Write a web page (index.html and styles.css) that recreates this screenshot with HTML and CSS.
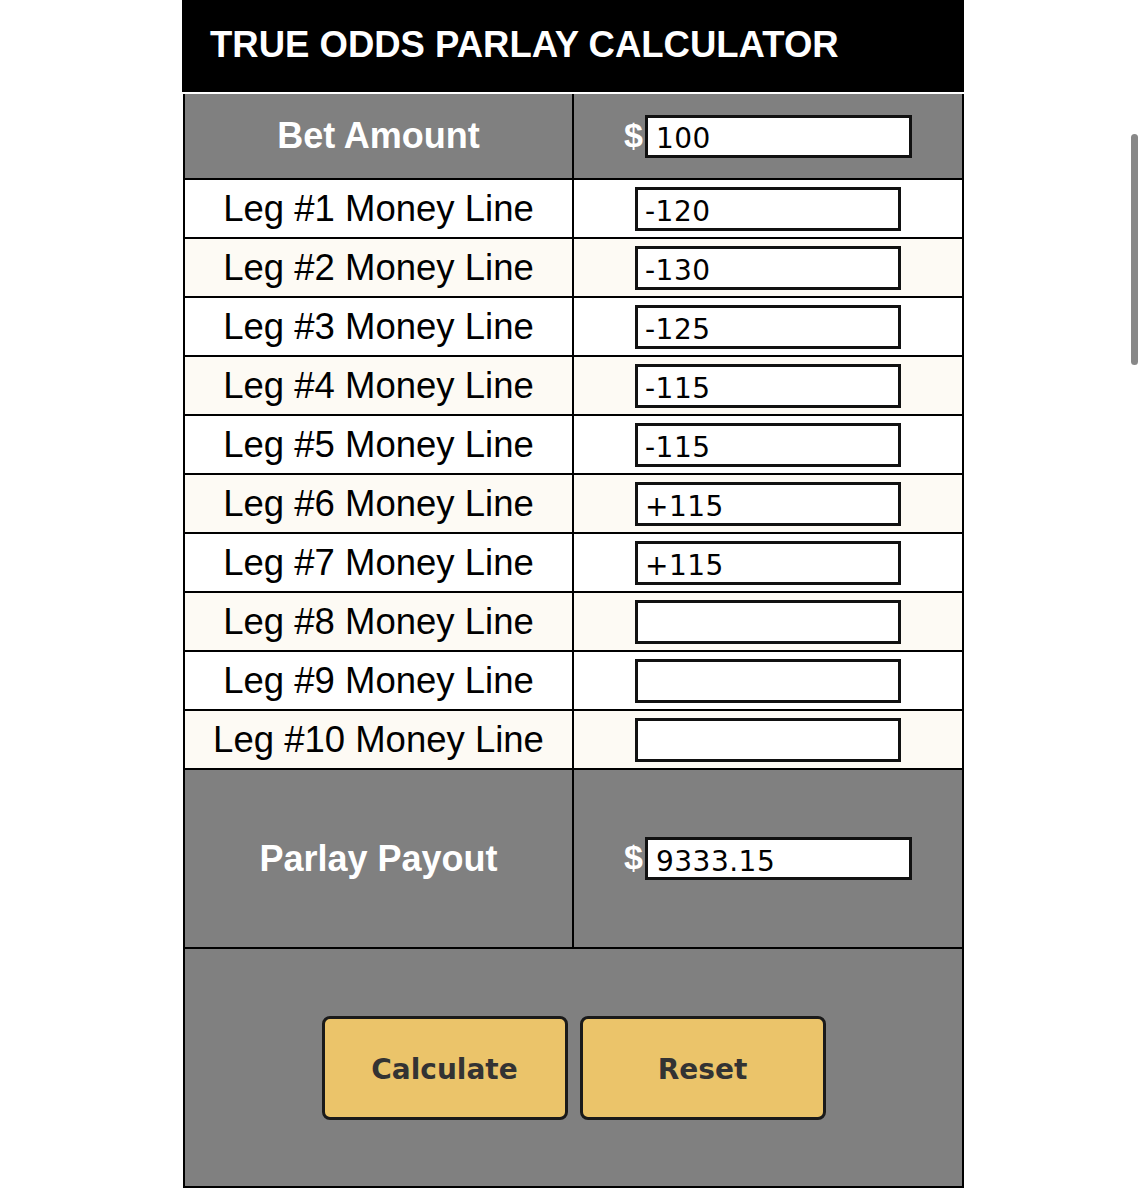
FILE: index.html
```html
<!DOCTYPE html>
<html lang="en">

<head>
    <meta charset="UTF-8">
    <meta name="viewport" content="width=device-width, initial-scale=1.0">
    <title>True Odds Parlay Calculator</title>
    <link rel="stylesheet" href="styles.css">
</head>

<body>
    <div class="calculator">
        <h1 class="title">TRUE ODDS PARLAY CALCULATOR</h1>

        <div class="grid">
            <div class="cell dark label-bold">Bet Amount</div>
            <div class="cell dark">
                <span class="dollar">$</span>
                <input class="money" type="text" id="bet" value="100">
            </div>

            <div class="cell label">Leg #1 Money Line</div>
            <div class="cell"><input class="line" type="text" value="-120"></div>

            <div class="cell cream label">Leg #2 Money Line</div>
            <div class="cell cream"><input class="line" type="text" value="-130"></div>

            <div class="cell label">Leg #3 Money Line</div>
            <div class="cell"><input class="line" type="text" value="-125"></div>

            <div class="cell cream label">Leg #4 Money Line</div>
            <div class="cell cream"><input class="line" type="text" value="-115"></div>

            <div class="cell label">Leg #5 Money Line</div>
            <div class="cell"><input class="line" type="text" value="-115"></div>

            <div class="cell cream label">Leg #6 Money Line</div>
            <div class="cell cream"><input class="line" type="text" value="+115"></div>

            <div class="cell label">Leg #7 Money Line</div>
            <div class="cell"><input class="line" type="text" value="+115"></div>

            <div class="cell cream label">Leg #8 Money Line</div>
            <div class="cell cream"><input class="line" type="text" value=""></div>

            <div class="cell label">Leg #9 Money Line</div>
            <div class="cell"><input class="line" type="text" value=""></div>

            <div class="cell cream label">Leg #10 Money Line</div>
            <div class="cell cream"><input class="line" type="text" value=""></div>

            <div class="cell dark label-bold">Parlay Payout</div>
            <div class="cell dark">
                <span class="dollar">$</span>
                <input class="money" type="text" id="payout" value="9333.15">
            </div>

            <div class="cell dark buttons">
                <button class="btn" id="calc">Calculate</button>
                <button class="btn" id="reset">Reset</button>
            </div>
        </div>
    </div>

    <div class="scrollbar"></div>

    <script>
        const legs = document.querySelectorAll(".line");
        const bet = document.querySelector("#bet");
        const payout = document.querySelector("#payout");

        document.querySelector("#calc").addEventListener("click", () => {
            let total = parseFloat(bet.value) || 0;
            legs.forEach((leg) => {
                const ml = parseFloat(leg.value);
                if (isNaN(ml)) return;
                // american odds to decimal
                total *= ml > 0 ? 1 + ml / 100 : 1 + 100 / Math.abs(ml);
            });
            payout.value = total.toFixed(2);
        });

        document.querySelector("#reset").addEventListener("click", () => {
            legs.forEach((leg) => leg.value = "");
            bet.value = "";
            payout.value = "";
        });
    </script>
</body>

</html>
```

FILE: styles.css
```css
body {
    margin: 0;
    padding: 0;
    background-color: white;
    font-family: "Liberation Sans", Arial, sans-serif;
}

.calculator {
    width: 782px;
    margin-left: 182px;
}

.title {
    margin: 0 0 2px 0;
    height: 92px;
    line-height: 90px;
    padding-left: 28px;
    background-color: black;
    color: white;
    font-size: 36.5px;
    font-weight: bold;
}

.grid {
    display: grid;
    grid-template-columns: 387px 388px;
    grid-template-rows: 84px repeat(10, 57px) 177px 237px;
    gap: 2px;
    padding: 0 2px 2px 2px;
    margin-left: 1px;
    width: 777px;
    background-color: black;
}

.cell {
    display: flex;
    align-items: center;
    justify-content: center;
    background-color: white;
}

.cream {
    background-color: #fdfaf4;
}

.dark {
    background-color: #808080;
}

.label {
    font-size: 36.5px;
    color: black;
}

.label-bold {
    font-size: 36px;
    font-weight: bold;
    color: white;
}

.line,
.money {
    box-sizing: border-box;
    height: 44px;
    width: 266px;
    border: 3px solid #111;
    border-radius: 0;
    padding: 5px 7px 0 7px;
    background-color: white;
    font-family: "DejaVu Sans", Verdana, sans-serif;
    font-size: 28px;
    letter-spacing: 0.5px;
    color: black;
    outline: none;
}

.money {
    height: 43px;
    width: 267px;
    padding-left: 8px;
}

.dollar {
    font-family: "Liberation Sans", Arial, sans-serif;
    font-weight: bold;
    font-size: 34px;
    color: white;
    margin-right: 2px;
    margin-top: -2px;
}

.buttons {
    grid-column: 1 / span 2;
    gap: 12px;
}

.btn {
    width: 246px;
    height: 104px;
    border: 3px solid #1a1a1a;
    border-radius: 8px;
    background-color: #ebc46a;
    color: #333;
    font-family: "DejaVu Sans", Verdana, sans-serif;
    font-size: 28px;
    font-weight: bold;
    padding-top: 4px;
    cursor: pointer;
}

.scrollbar {
    position: absolute;
    top: 134px;
    left: 1131px;
    width: 7px;
    height: 231px;
    border-radius: 4px;
    background-color: #888;
}
```
